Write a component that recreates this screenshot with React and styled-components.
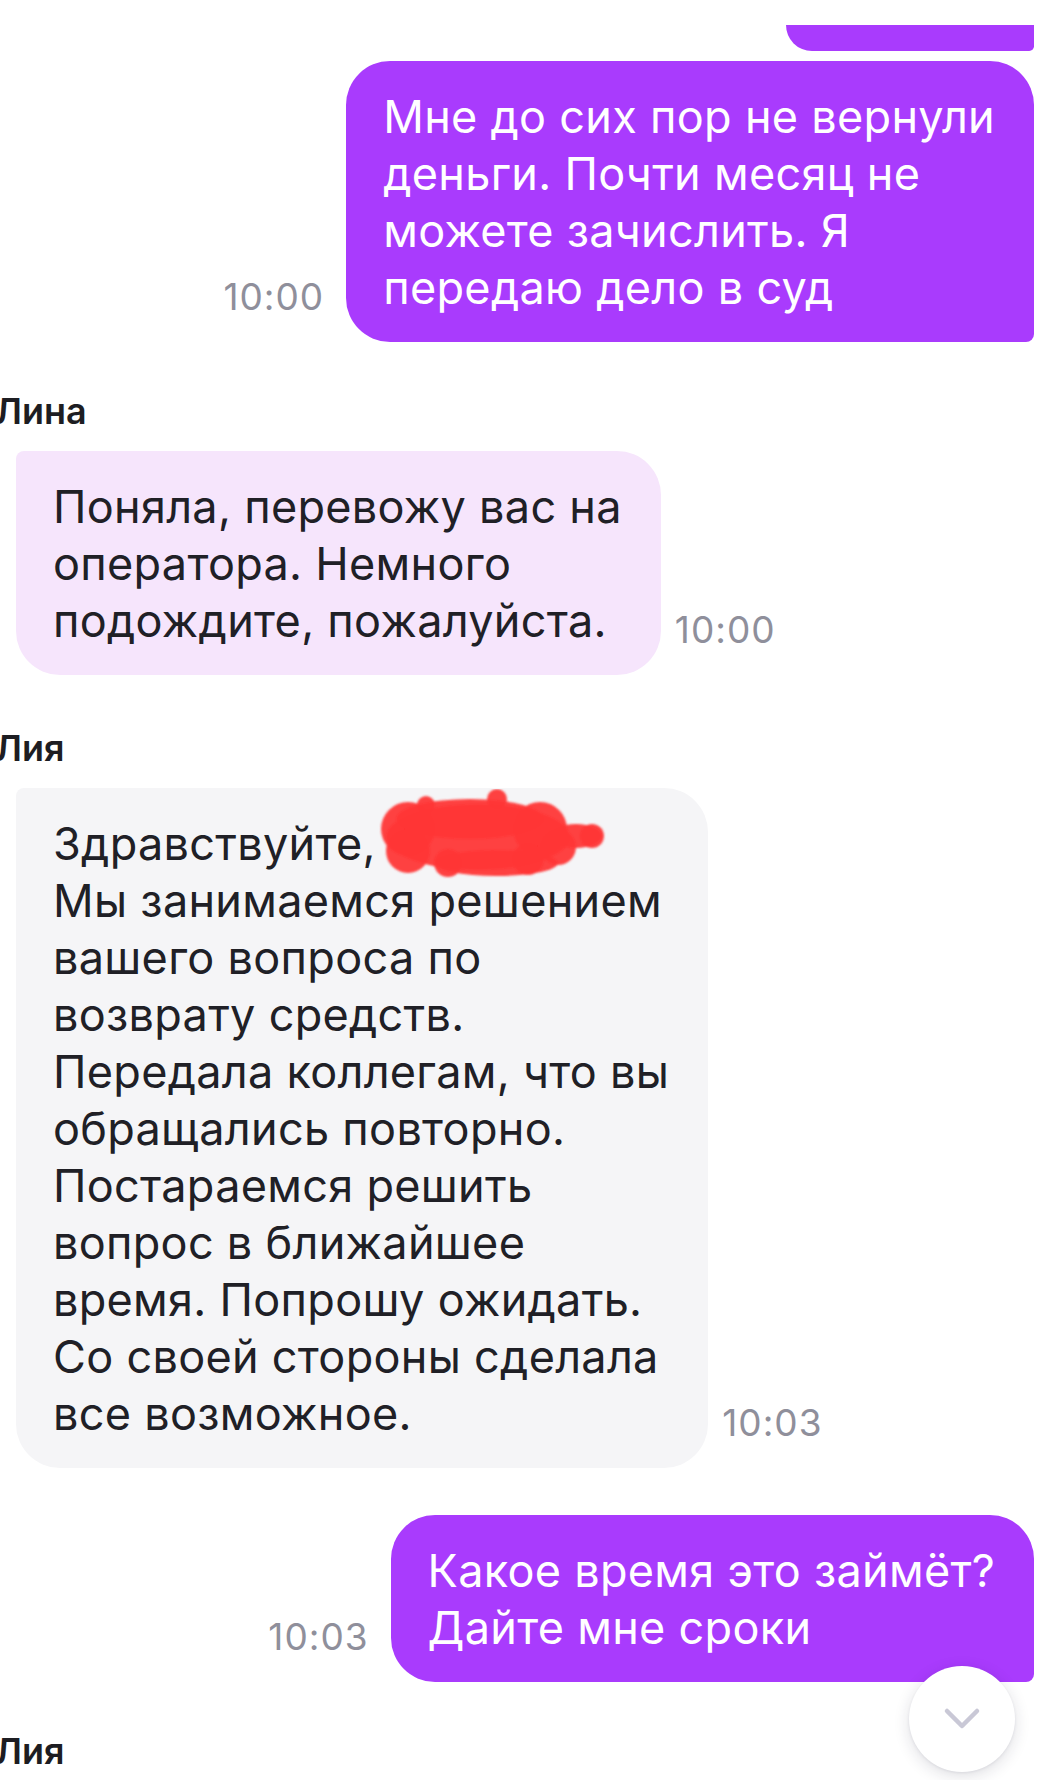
import React from 'react';
import styled, { createGlobalStyle } from 'styled-components';

const GlobalStyle = createGlobalStyle`
  html, body {
    margin: 0;
    padding: 0;
    background: #ffffff;
  }
  body {
    font-family: Inter, "Noto Sans", "Liberation Sans", sans-serif;
    -webkit-font-smoothing: antialiased;
  }
`;

const Screen = styled.div`
  position: relative;
  width: 1052px;
  height: 1780px;
  overflow: hidden;
  background: #ffffff;
  display: flex;
  flex-direction: column;
  padding: 25px 18px 0 16px;
  box-sizing: border-box;

  & > * {
    flex-shrink: 0;
  }
`;

const Row = styled.div`
  display: flex;
  align-items: flex-end;
  justify-content: ${p => (p.$out ? 'flex-end' : 'flex-start')};
  gap: ${p => (p.$out ? '22px' : '14px')};
  margin-top: ${p => p.$top || 0}px;
`;

const bubbleColors = {
  out: '#a93bfd',
  bot: '#f6e5fc',
  agent: '#f5f5f7',
};

const Bubble = styled.div`
  background: ${p => bubbleColors[p.$variant]};
  color: ${p => (p.$variant === 'out' ? '#ffffff' : '#202026')};
  border-radius: ${p => (p.$variant === 'out' ? '44px 44px 8px 44px' : '8px 44px 44px 44px')};
  padding: 27px 39px 26px 37px;
  font-size: 45px;
  line-height: 57px;
  letter-spacing: 0.3px;
`;

const Tail = styled.div`
  align-self: flex-end;
  width: 248px;
  height: 26px;
  background: ${bubbleColors.out};
  border-radius: 0 0 8px 44px;
`;

const Line = styled.div`
  white-space: nowrap;
`;

const Time = styled.div`
  font-size: 37px;
  line-height: 40px;
  letter-spacing: 1px;
  color: #8f8f9b;
  margin-bottom: 25px;
  flex-shrink: 0;
`;

const SenderName = styled.div`
  font-size: 36px;
  line-height: 40px;
  font-weight: 600;
  color: #1d1d22;
  margin: ${p => p.$top}px 0 20px -21px;
`;

const Redacted = styled.span`
  display: inline-block;
  position: relative;
  width: 150px;
  height: 40px;
  vertical-align: top;

  svg {
    position: absolute;
    left: -11px;
    top: -26px;
  }
`;

const ScrollDown = styled.button`
  position: absolute;
  left: 909px;
  top: 1666px;
  width: 106px;
  height: 106px;
  border-radius: 50%;
  border: none;
  background: #ffffff;
  box-shadow: 0 4px 16px rgba(30, 30, 60, 0.14), 0 1px 3px rgba(30, 30, 60, 0.08);
  display: flex;
  align-items: center;
  justify-content: center;
  padding: 0;
`;

const Message = ({ out, variant, time, lines, top }) => (
  <Row $out={out} $top={top}>
    {out && <Time>{time}</Time>}
    <Bubble $variant={variant}>
      {lines.map((l, i) => (
        <Line key={i}>{l}</Line>
      ))}
    </Bubble>
    {!out && <Time>{time}</Time>}
  </Row>
);

// red marker smudge hiding the client's name
const Scribble = () => (
  <svg width="232" height="92" viewBox="0 0 232 92">
    <defs>
      <filter id="soft" x="-10%" y="-10%" width="120%" height="120%">
        <feGaussianBlur stdDeviation="1.1" />
      </filter>
    </defs>
    <g fill="#ff3535" fillOpacity="0.93" filter="url(#soft)">
      <ellipse cx="100" cy="48" rx="92" ry="33" />
      <circle cx="30" cy="40" r="27" />
      <circle cx="30" cy="62" r="22" />
      <circle cx="48" cy="16" r="9" />
      <circle cx="119" cy="10" r="10" />
      <ellipse cx="92" cy="30" rx="74" ry="20" />
      <circle cx="162" cy="40" r="27" />
      <circle cx="180" cy="58" r="18" />
      <ellipse cx="198" cy="47" rx="26" ry="12" />
      <circle cx="214" cy="47" r="12" />
      <ellipse cx="118" cy="74" rx="62" ry="13" />
      <circle cx="150" cy="70" r="16" />
      <circle cx="70" cy="74" r="14" />
    </g>
  </svg>
);

const ChevronDown = () => (
  <svg width="38" height="24" viewBox="0 0 38 24">
    <polyline
      points="4,4 19,19 34,4"
      fill="none"
      stroke="#c9c8d6"
      strokeWidth="4.5"
      strokeLinecap="round"
      strokeLinejoin="round"
    />
  </svg>
);

export default function App() {
  return (
    <>
      <GlobalStyle />
      <Screen>
        <Tail />
        <Message
          out
          variant="out"
          top={10}
          time="10:00"
          lines={[
            'Мне до сих пор не вернули',
            'деньги. Почти месяц не',
            'можете зачислить. Я',
            'передаю дело в суд',
          ]}
        />

        <SenderName $top={49}>Лина</SenderName>
        <Message
          variant="bot"
          time="10:00"
          lines={[
            'Поняла, перевожу вас на',
            'оператора. Немного',
            'подождите, пожалуйста.',
          ]}
        />

        <SenderName $top={53}>Лия</SenderName>
        <Message
          variant="agent"
          time="10:03"
          lines={[
            <>
              Здравствуйте,{' '}
              <Redacted>
                <Scribble />
              </Redacted>
            </>,
            'Мы занимаемся решением',
            'вашего вопроса по',
            'возврату средств.',
            'Передала коллегам, что вы',
            'обращались повторно.',
            'Постараемся решить',
            'вопрос в ближайшее',
            'время. Попрошу ожидать.',
            'Со своей стороны сделала',
            'все возможное.',
          ]}
        />

        <Message
          out
          variant="out"
          top={47}
          time="10:03"
          lines={['Какое время это займёт?', 'Дайте мне сроки']}
        />

        <SenderName $top={49}>Лия</SenderName>

        <ScrollDown aria-label="Вниз">
          <ChevronDown />
        </ScrollDown>
      </Screen>
    </>
  );
}
